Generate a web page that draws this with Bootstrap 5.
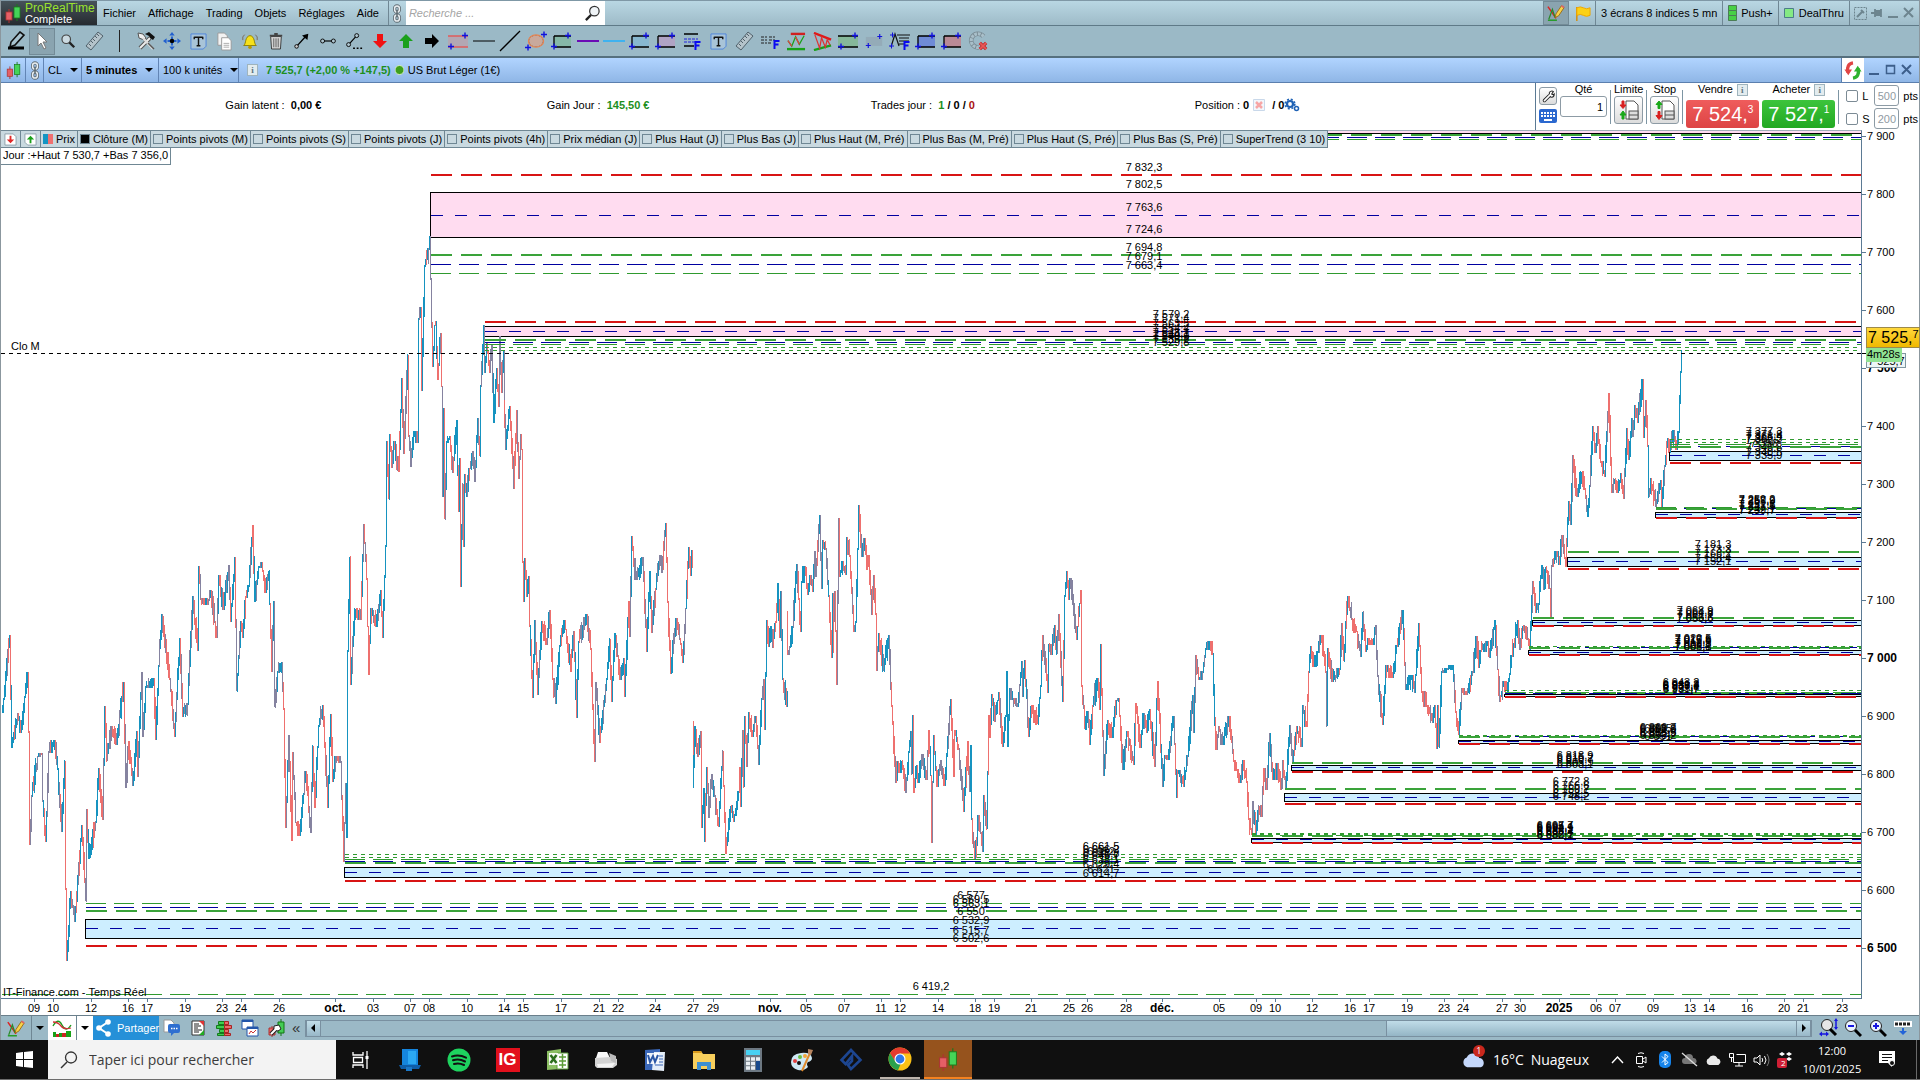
<!DOCTYPE html>
<html lang="fr">
<head>
<meta charset="utf-8">
<meta name="viewport" content="width=device-width, initial-scale=1">
<title>ProRealTime Complete</title>
<link href="https://cdn.jsdelivr.net/npm/bootstrap@5.3.0/dist/css/bootstrap.min.css" rel="stylesheet">
<script src="https://cdn.jsdelivr.net/npm/bootstrap@5.3.0/dist/js/bootstrap.bundle.min.js"></script>
<style>
:root{--steel:#9bb9c6;--edge:#6f8794;--ink:#101010}
body{font-family:"Liberation Sans",Arial,sans-serif;font-size:11px;line-height:14px;color:#000;background:#fff;overflow:hidden}
button,input{font:inherit;color:inherit}
button{border:0;background:none;padding:0}
a{color:inherit;text-decoration:none}
svg{display:block;flex:none}
.terminal{border-left:1px solid #8b979e;border-right:1px solid #8b979e;min-height:0}
.menubar{height:26px;background:linear-gradient(#b9d7e3,#9ebbc8);border-top:1px solid #7f98a6;border-bottom:1px solid #5f7a88}
.brand{width:96px;background:linear-gradient(#46525a,#262b30);line-height:11px;padding-left:4px;gap:4px}
.brand-name{color:#9ae32e;font-size:12px;line-height:12px}
.brand-sub{color:#fff;font-size:11px}
.menus{gap:12px;padding-left:6px;padding-right:9px}
.cell{border-left:1px solid var(--edge);padding:0 5px;white-space:nowrap}
.linker{width:18px}
.winctl{gap:4px;padding:0 4px}
.find{width:199px;background:#fff}
.find input{border:0;outline:0;width:170px;padding:0 3px;font-style:italic;background:none}
.find input::placeholder{color:#a5a5a5;opacity:1}
.pressed{background:#8aa4b0;box-shadow:inset 0 0 0 1px #738b97}
.toolbar{height:32px;background:var(--steel);border-bottom:2px solid #56707e;padding-left:2px}
.tool{width:26px;height:27px;display:flex;align-items:center;justify-content:center}
.titlebar{height:25px;background:linear-gradient(#b1d4ff,#8fb6e6);border-bottom:1px solid #5b7fae}
.titlebar .slot{border-right:1px solid #6285b5;height:100%;display:flex;align-items:center;white-space:nowrap}
.caret{width:0;height:0;border:4px solid transparent;border-top:4px solid #000;border-bottom:0}
.gain{color:#1d8f1d}
.loss{color:#a80f0f}
.sync{width:23px;background:#fff;border-left:1px solid #5b7fae;align-self:stretch;display:flex;align-items:center;justify-content:center}
.account{height:47px}
.figures{padding:0 125px 4px 110px}
.ticket{width:384px;border-left:1px solid #5b7a94;padding-left:3px;gap:3px}
.ticket .head{height:13px;line-height:13px}
.ticket .rule{width:1px;height:34px;background:#7d95a3;margin-top:7px}
.boxbtn{background:linear-gradient(#fff,#dcdcdc);border:1px solid #8d9ba5;border-radius:3px;display:flex;align-items:center;justify-content:center}
.boxbtn.tall{width:29px;height:28px}
.qty{width:47px;height:21px;border:1px solid #8d9ba5;border-radius:3px;text-align:right;padding:0 3px}
.deal{width:73px;height:28px;border-radius:3px;color:#fff;font-size:20px;line-height:26px;text-align:center;white-space:nowrap}
.deal sup{font-size:10px;top:-8px}
.deal-head{margin-bottom:4px}
.guards{gap:2px;padding-top:2px}
.guards label{width:8px}
.sell{background:linear-gradient(#ef5c5c,#dd4444)}
.buy{background:linear-gradient(#3cc43c,#22a822)}
.info{width:11px;height:12px;border:1px solid #9fb4bd;background:#e3ecef;color:#5c747f;font:bold 9px/10px "Liberation Serif",serif;text-align:center}
.tick{appearance:none;width:12px;height:12px;border:1px solid #7c8b95;border-radius:2px;margin:0;background:#fff}
.pts{width:25px;height:21px;border:1px solid #8d9ba5;border-radius:3px;text-align:center;color:#8f9aa2;padding:0}
.sheet{min-height:0}
.plot{border-right:1px solid #5b7a94;border-bottom:1px solid #5b7a94;border-top:1px solid #9fb0b9;position:relative;min-width:0}
.overlays{position:absolute;left:0;top:-1px;z-index:2}
.legend{height:18px;background:#c9d9e0;border:1px solid #6f8794;border-left:0;width:max-content}
.legend label,.legend button{padding:0 2px;height:16px;display:flex;align-items:center;gap:3px;border-right:1px solid #6f8794;white-space:nowrap}
.legend button{padding:0 3px}
.legend .export{color:#e02828}
.legend .import{color:#1aa01a}
.legend .import svg{transform:rotate(180deg)}
.legend label:last-child{border-right:0}
.legend input{appearance:none;width:10px;height:10px;border:1px solid #6f8794;margin:0}
.legend .two{background:linear-gradient(90deg,#1595c3 50%,#f07070 50%);border:0}
.legend .full{background:#000}
.range-note{background:#fff;border:1px solid #6f8794;border-left:0;border-top:0;width:max-content;height:17px;padding:0 2px;line-height:15px}
.price-axis{width:57px;position:relative}
.tag{position:absolute;left:4px;white-space:nowrap}
.tag-last{width:54px;height:21px;background:linear-gradient(#ffd83c,#f0b800);border:1px solid #9d8a4a;font-size:16px;line-height:19px;padding-left:1px}
.tag-last sup{font-size:11px;top:-5px}
.tag-timer{height:14px;width:36px;background:#90e292;font-size:11px;line-height:13px;padding-left:1px}
.tag-close{height:15px;width:40px;background:#edf5f6;border:1px solid #8197a1;line-height:14px;padding-left:1px}
.dates{height:16px}
.bottombar{height:25px;background:var(--steel);border-top:1px solid #6a7f8b}
.share{background:#2590d8;color:#fff;width:66px;gap:6px;padding-left:3px}
.chevrons{font-size:15px;line-height:16px;padding-left:3px;color:#333}
.scrollrail{border:1px solid #7990a0;height:17px;margin:0 7px 0 5px;background:#9bb9c6}
.scrollrail button{width:15px;background:linear-gradient(#c2dde8,#98b8c8);border:1px solid #7990a0;border-width:0 1px;display:flex;align-items:center;justify-content:center}
.thumb{background:linear-gradient(#c0dce8,#94b5c5);width:410px;border-left:1px solid #7990a0}
.zoomer{width:25px}
.taskbar{height:40px;background:var(--ink);color:#fff;font-family:"Open Sans","Noto Sans",sans-serif;border-bottom:1px solid #6d6d6d}
.task{width:49px;display:flex;align-items:center;justify-content:center}
.start{width:48px}
.tasksearch{width:288px;background:#f3f3f3;color:#3b3b3b;padding-left:12px;gap:11px}
.tasksearch input{border:0;outline:0;background:none;font-size:14px;padding:0;width:220px}
.tasksearch input::placeholder{color:#3b3b3b;opacity:1}
.ig{width:24px;height:24px;background:#e2101c;font:bold 17px/24px "Liberation Sans",sans-serif}
.task-open{border-bottom:2px solid #bdb5ad;width:40px;margin:0 4px 0 5px}
.task-live{background:#96531d;border-bottom:2px solid #f5821f;width:48px}
.tray .ti{width:24px;display:flex;justify-content:center}
.weather{font-size:14px;gap:7px;padding-right:16px}
.alert-dot{right:1px;top:-6px;width:12px;height:12px;background:#c9281d;font-size:9px;line-height:12px}
.sync-dot{left:8px;bottom:-1px;font-size:8px;line-height:12px}
.clock{width:70px;font-size:11px;line-height:18px;text-align:center}
.notify{width:49px;padding-left:12px}
.peek{border-left:1px solid #6a6a6a;width:4px}
.face-light{color:#c5d8fb}
.face-white{color:#e9e9e9}
</style>
</head>
<body>
<svg width="0" height="0" class="position-absolute" aria-hidden="true">
<defs>
<symbol id="candles" viewBox="0 0 16 20"><path d="M4 6v14" stroke="#b03030"/><rect x="1" y="9" width="6" height="8" fill="#e55f66" stroke="#a33" stroke-width=".8"/><path d="M12 1v17" stroke="#1c7a1c"/><rect x="9" y="4" width="6" height="11" fill="#45d458" stroke="#1c7a1c" stroke-width=".8"/></symbol>
<symbol id="chain" viewBox="0 0 12 20"><g fill="none" stroke="#5f6b72" stroke-width="3.4"><rect x="3.500" y="2" width="5" height="6.500" rx="2.500"/><rect x="3.500" y="11.500" width="5" height="6.500" rx="2.500"/></g><g fill="none" stroke="#e9eef1" stroke-width="1.600"><rect x="3.500" y="2" width="5" height="6.500" rx="2.500"/><rect x="3.500" y="11.500" width="5" height="6.500" rx="2.500"/><path d="M6 6v8" stroke="#5f6b72"/></g></symbol>
<symbol id="lens" viewBox="0 0 18 18"><circle cx="11" cy="6.500" r="5" fill="#e9f0f3" fill-opacity=".7" stroke="#333" stroke-width="1.300"/><path d="M7.500 10.500L2 16" stroke="#222" stroke-width="2.400"/></symbol>
<symbol id="lens-l" viewBox="0 0 18 18"><circle cx="7" cy="7" r="4.800" fill="#dfe8ec" fill-opacity=".7" stroke="#444" stroke-width="1.300"/><path d="M10.500 10.500L16 16" stroke="#222" stroke-width="2.600"/></symbol>
<symbol id="pen" viewBox="0 0 20 20"><path d="M4 16L5 11 14 1l4 3-9 10z" fill="#a8c3cf" stroke="#111" stroke-width="1.600"/><path d="M2 17h16" stroke="#000" stroke-width="3"/></symbol>
<symbol id="cursor" viewBox="0 0 14 18"><path d="M3 1v13l3-3 3 6 2-1-3-6h4z" fill="#fff" stroke="#777"/></symbol>
<symbol id="ruler" viewBox="0 0 20 20"><path d="M2 15L14 1l5 4L7 19z" fill="#b4c3ca" stroke="#50616b"/><path d="M5 13l2 2M7 10l2 2M9 8l2 2M11 5l2 2M13 3l2 2" stroke="#50616b"/></symbol>
<symbol id="tools" viewBox="0 0 20 20"><path d="M4 17L14 7" stroke="#555" stroke-width="4"/><path d="M4 17L14 7" stroke="#eee" stroke-width="2"/><path d="M2 2l5 1 3 4-2 2-5-2z" fill="#eee" stroke="#555"/><path d="M9 3l4-2 6 5-2 3-3-2-1-2z" fill="#111"/><path d="M7 7l10 11" stroke="#ddd" stroke-width="2.500"/><path d="M12 12l6 6" stroke="#555" stroke-width="1.500"/></symbol>
<symbol id="move" viewBox="0 0 20 20"><path d="M10 0l3 4H7zM10 20l3-4H7zM0 10l4-3v6zM20 10l-4-3v6z" fill="#2260cf"/><path d="M9 5h2v10H9zM5 9h10v2H5z" fill="#2260cf"/><circle cx="10" cy="10" r="2.500" fill="#000"/></symbol>
<symbol id="note" viewBox="0 0 18 18"><path d="M1 1h16v13l-3 3H1z" fill="#a9c4d8" stroke="#4f85dd"/><path d="M4.500 4v2.500M4.500 4.500h9M13.500 4v2.500M9 4.500v9M7 13.500h4" stroke="#111" stroke-width="1.500" fill="none"/></symbol>
<symbol id="copy" viewBox="0 0 18 20"><path d="M2 1h7l3 3v10H2z" fill="#f2f2f2" stroke="#999"/><path d="M6 6h7l3 3v10H6z" fill="#fff" stroke="#999"/><path d="M8 12h6M8 14h6M8 16h6" stroke="#aaa"/></symbol>
<symbol id="bell" viewBox="0 0 20 20"><path d="M3 15c3-2 1-10 7-11 6 1 4 9 7 11z" fill="#f7e11b" stroke="#8a7a00"/><circle cx="10" cy="17" r="2" fill="#b89c00"/><path d="M4 3q-3 2-2 6M16 3q3 2 2 6" stroke="#765" fill="none"/></symbol>
<symbol id="bin" viewBox="0 0 18 20"><path d="M3 5h12l-1 14H4z" fill="#d4d4d4" stroke="#333"/><path d="M2 4h14M7 2h4" stroke="#444" stroke-width="2"/><path d="M6.500 7v10M9 7v10M11.500 7v10" stroke="#555" stroke-width="1"/></symbol>
<symbol id="ray" viewBox="0 0 20 20"><path d="M4 16L14 5" stroke="#000" stroke-width="1.500"/><circle cx="4" cy="16" r="2" fill="#ccc" stroke="#000"/><path d="M17 2l-1 7-6-5z"/></symbol>
<symbol id="seg" viewBox="0 0 20 20"><path d="M4 10h12" stroke="#000" stroke-width="1.300"/><circle cx="4" cy="10" r="2.200" fill="#aec5cf" stroke="#000"/><circle cx="16" cy="10" r="2.200" fill="#aec5cf" stroke="#000"/></symbol>
<symbol id="segd" viewBox="0 0 20 20"><path d="M4 14L13 4" stroke="#000" stroke-width="1.300"/><circle cx="4" cy="14" r="2.200" fill="#aec5cf" stroke="#000"/><circle cx="13" cy="4" r="2.200" fill="#aec5cf" stroke="#000"/><path d="M9 18h2M13 18h2M17 18h2" stroke="#000" stroke-width="1.500"/></symbol>
<symbol id="band" viewBox="0 0 22 18"><rect x="1" y="4" width="20" height="11" fill="var(--f,none)"/><path d="M1 4h20M1 15h20" stroke="var(--l,#000)" stroke-width="1.500"/><path d="M15 3.500h6M18 .500v6M1 14.500h6M4 11.500v6" stroke="#1111dd" stroke-width="1.400"/></symbol>
<symbol id="box" viewBox="0 0 22 18"><rect x="3" y="4" width="17" height="11" fill="var(--f,none)"/><path d="M3 4h17M3 15h17M3 4v11" stroke="#000" stroke-width="1.300"/><path d="M14 3.500h6M17 .500v6M0 14.500h6M3 11.500v6" stroke="#1111dd" stroke-width="1.400"/></symbol>
<symbol id="oval" viewBox="0 0 22 20"><ellipse cx="11" cy="10" rx="7.500" ry="6" fill="#b9ad a8" stroke="#e8834f" stroke-width="1.400"/><ellipse cx="11" cy="10" rx="7" ry="5.500" fill="#c9a99c"/><path d="M16 3.500h6M19 .500v6M0 16.500h6M3 13.500v6" stroke="#1111dd" stroke-width="1.400"/></symbol>
<symbol id="fibo" viewBox="0 0 20 20"><path d="M2 3h14M2 15h10" stroke="#000" stroke-width="1.500"/><path d="M2 8h14M2 11h14" stroke="#22d" stroke-dasharray="3 1"/><path d="M13.500 19v-8h5M13.500 14.500h4" stroke="#0a0af0" stroke-width="2" fill="none"/></symbol>
<symbol id="fibod" viewBox="0 0 20 20"><path d="M1 6h6M9 6h6M1 9h6M9 9h6M1 12h6M8 12h4" stroke="#222" stroke-width="1.200" stroke-dasharray="3 1"/><path d="M14.500 18v-8h5M14.500 13.500h4" stroke="#0a0af0" stroke-width="2" fill="none"/></symbol>
<symbol id="zig" viewBox="0 0 22 20"><path d="M5 2h15" stroke="#d02020" stroke-width="2.500"/><path d="M1 18h19" stroke="#18a018" stroke-width="2.500"/><path d="M2 9l4 6 4-10 4 8 5-9" stroke="#18a018" fill="none" stroke-width="1.300"/><path d="M2 9l4 6M10 5l4 8" stroke="#e04040" stroke-width="1.300"/></symbol>
<symbol id="wedge" viewBox="0 0 22 20"><path d="M2 1l18 7" stroke="#e01818" stroke-width="2.500"/><path d="M2 19l18-5" stroke="#18a018" stroke-width="2.500"/><path d="M3 3l5 14 2-11 4 10 2-8 3 6" stroke="#d33" fill="none" stroke-width="1.300"/></symbol>
<symbol id="flag" viewBox="0 0 18 18"><path d="M3 2v15" stroke="#d98b00" stroke-width="1.500"/><path d="M3 3q4-2 7 0t7 0v8q-4 2-7 0t-7 0z" fill="#fcd116" stroke="#eda600"/></symbol>
<symbol id="draw" viewBox="0 0 22 20"><path d="M2 3l5 7 4 6" stroke="#d22" stroke-width="1.600" fill="none"/><path d="M3 17L7 6l3 9" stroke="#2a8a2a" stroke-width="1.400" fill="none"/><path d="M2 18h10" stroke="#1a9a1a" stroke-width="1.500"/><path d="M10 15l1-4 6-9 3 2-6 9z" fill="#f8d34a" stroke="#9a6a10"/><path d="M17 2l3 2" stroke="#d66" stroke-width="2"/></symbol>
<symbol id="magnet" viewBox="0 0 22 22"><path d="M17 6A7.500 7.500 0 1 0 12 18" stroke="#7a8c95" stroke-width="5" fill="none"/><path d="M17 6A7.500 7.500 0 1 0 12 18" stroke="#a9bfc9" stroke-width="3.400" stroke-dasharray="3 1" fill="none"/><path d="M13 13l7 7M20 13l-7 7" stroke="#c01c1c" stroke-width="3.500"/><path d="M13 13l7 7M20 13l-7 7" stroke="#e75a5a" stroke-width="2"/></symbol>
<symbol id="sync" viewBox="0 0 18 20"><path d="M9 2Q2 3 3.500 12" stroke="#e04545" stroke-width="3.600" fill="none"/><path d="M0 9h8l-4 6z" fill="#e04545"/><path d="M9 18Q16 17 14.500 8" stroke="#2fb32f" stroke-width="3.600" fill="none"/><path d="M10 11h8l-4-6z" fill="#2fb32f"/></symbol>
<symbol id="wrench" viewBox="0 0 16 16"><path d="M3 13l6-6" stroke="#222" stroke-width="4.200" stroke-linecap="round"/><path d="M9 3q3-3 5-1l-2 3 2 1 1-1q0 4-3 4T9 3" fill="#fff" stroke="#222" stroke-width="1.300"/><path d="M3 13l7-7" stroke="#fff" stroke-width="2" stroke-linecap="round"/></symbol>
<symbol id="order" viewBox="0 0 22 22"><path d="M8 2h8l4 4v14H8z" fill="#fff" stroke="#555"/><rect x="11" y="12" width="9" height="8" fill="#ddd" stroke="#555"/><path d="M11 16h9" stroke="#555"/><path d="M4 2h2v4h2L5 9.500 2 6h2z" fill="#d82020" stroke="#d82020"/><path d="M4 20h2v-4h2l-3-4-3 4h2z" fill="#1aa81a" stroke="#1aa81a"/></symbol>
<symbol id="order-s" viewBox="0 0 22 22"><path d="M8 2h8l4 4v14H8z" fill="#fff" stroke="#555"/><rect x="11" y="12" width="9" height="8" fill="#ddd" stroke="#555"/><path d="M11 16h9" stroke="#555"/><path d="M4 9.500h2v-4h2L5 2 2 5.500h2z" fill="#1aa81a" stroke="#1aa81a"/><path d="M4 12.500h2v4h2l-3 4-3-4h2z" fill="#d82020" stroke="#d82020"/></symbol>
<symbol id="gears" viewBox="0 0 16 14"><circle cx="6" cy="6" r="3" fill="none" stroke="#1f62b5" stroke-width="2.200"/><circle cx="6" cy="6" r="4.800" fill="none" stroke="#1f62b5" stroke-width="1.600" stroke-dasharray="2 1.800"/><circle cx="12.500" cy="10.500" r="2" fill="none" stroke="#1f62b5" stroke-width="1.500"/></symbol>
<symbol id="doc" viewBox="0 0 14 14"><path d="M1 1h9l3 3v9H1z" fill="#fff" stroke="#8da0ab"/><path d="M6 3h2v4h3l-4 4-4-4h3z" fill="currentColor"/></symbol>
<symbol id="cloud" viewBox="0 0 24 16"><path d="M6 15a5 5 0 0 1-.500-9.500A6.500 6.500 0 0 1 17.500 6 4.700 4.700 0 0 1 19 15z" fill="currentColor"/></symbol>
</defs>
</svg>

<div class="d-flex flex-column vh-100">
<div class="terminal d-flex flex-column flex-grow-1">

<header class="menubar d-flex align-items-stretch">
  <div class="brand d-flex align-items-center"><svg width="16" height="20"><use href="#candles"/></svg><div><div class="brand-name">ProRealTime</div><div class="brand-sub">Complete</div></div></div>
  <nav class="menus d-flex align-items-center"><a href="#">Fichier</a><a href="#">Affichage</a><a href="#">Trading</a><a href="#">Objets</a><a href="#">Réglages</a><a href="#">Aide</a></nav>
  <button class="linker cell px-0 d-flex align-items-center justify-content-center" aria-label="Lier"><svg width="12" height="19"><use href="#chain"/></svg></button>
  <div class="find d-flex align-items-center"><input type="search" placeholder="Recherche ..." aria-label="Recherche"><svg class="ms-auto me-1" width="17" height="17"><use href="#lens"/></svg></div>
  <div class="ms-auto d-flex align-items-stretch">
    <button class="tool h-100 pressed" aria-label="Dessin"><svg width="20" height="18"><use href="#draw"/></svg></button>
    <button class="tool h-100" aria-label="Drapeau"><svg width="17" height="17"><use href="#flag"/></svg></button>
    <span class="cell d-flex align-items-center">3 écrans 8 indices 5 mn</span>
    <button class="cell d-flex align-items-center gap-1"><svg width="9" height="17"><path d="M.500.500h8v5h-8zM.500 5.500h8v5h-8zM.500 10.500h8v5h-8z" fill="#48d046" stroke="#4b7d55"/></svg>Push+</button>
    <button class="cell d-flex align-items-center gap-1"><svg width="11" height="11"><path d="M.500.500h9v9h-9z" fill="#84ea84" stroke="#4b7d88"/></svg>DealThru</button>
    <div class="cell winctl d-flex align-items-center"><svg width="13" height="13"><path d="M.500.500h12v12H.500z" fill="none" stroke="#6d858f" stroke-dasharray="2 1"/><path d="M3 10l5-5M7 3l3 3" stroke="#6d858f" stroke-width="2"/></svg>
    <svg width="12" height="12"><path d="M0 6h4M4 2v8M4 4h5v4H4M10 2v8" stroke="#6d858f" stroke-width="1.800" fill="#6d858f"/></svg>
    <svg width="12" height="12"><path d="M1 10h10" stroke="#6d858f" stroke-width="2"/></svg>
    <svg width="12" height="12"><path d="M1 1l9 9M10 1l-9 9" stroke="#6d858f" stroke-width="2"/></svg></div>
  </div>
</header>

<div class="toolbar d-flex align-items-center" role="toolbar">
<button class="tool"><svg width="20" height="20"><use href="#pen"/></svg></button>
<button class="tool pressed"><svg width="14" height="18"><use href="#cursor"/></svg></button>
<button class="tool"><svg width="16" height="16"><use href="#lens-l"/></svg></button>
<button class="tool"><svg width="20" height="20"><use href="#ruler"/></svg></button>
<span class="tool"><svg width="2" height="22"><path d="M.500 0v22" stroke="#222"/></svg></span>
<button class="tool"><svg width="20" height="20"><use href="#tools"/></svg></button>
<button class="tool"><svg width="18" height="18"><use href="#move"/></svg></button>
<button class="tool"><svg width="17" height="17"><use href="#note"/></svg></button>
<button class="tool"><svg width="17" height="19"><use href="#copy"/></svg></button>
<button class="tool"><svg width="20" height="18"><use href="#bell"/></svg></button>
<button class="tool"><svg width="16" height="18"><use href="#bin"/></svg></button>
<button class="tool"><svg width="18" height="18"><use href="#ray"/></svg></button>
<button class="tool"><svg width="18" height="18"><use href="#seg"/></svg></button>
<button class="tool"><svg width="18" height="20"><use href="#segd"/></svg></button>
<button class="tool"><svg width="14" height="16"><path d="M4 1h6v7h4l-7 7-7-7h4z" fill="#f01010"/></svg></button>
<button class="tool"><svg width="14" height="16"><path d="M4 15h6V8h4L7 1 0 8h4z" fill="#1ba01b"/></svg></button>
<button class="tool"><svg width="16" height="14"><path d="M1 4h7V0l7 7-7 7v-4H1z"/></svg></button>
<button class="tool" style="--f:#b3a7b3;--l:#e05c5c"><svg width="22" height="18"><use href="#band"/></svg></button>
<button class="tool"><svg width="22" height="2"><path d="M0 1h22" stroke="#000"/></svg></button>
<button class="tool"><svg width="22" height="22"><path d="M1 21L21 1" stroke="#000" stroke-width="1.300"/></svg></button>
<button class="tool"><svg width="22" height="20"><use href="#oval"/></svg></button>
<button class="tool" style="--f:#86b8a8"><svg width="22" height="18"><use href="#box"/></svg></button>
<button class="tool"><svg width="22" height="2"><path d="M0 1h22" stroke="#6a0bb5" stroke-width="2"/></svg></button>
<button class="tool"><svg width="22" height="2"><path d="M0 1h22" stroke="#3fb2ef" stroke-width="2"/></svg></button>
<button class="tool" style="--f:#88b8d0"><svg width="22" height="18"><use href="#box"/></svg></button>
<button class="tool" style="--f:#b0a4c4"><svg width="22" height="18"><use href="#box"/></svg></button>
<button class="tool"><svg width="20" height="20"><use href="#fibo"/></svg></button>
<button class="tool"><svg width="17" height="17"><use href="#note"/></svg></button>
<button class="tool"><svg width="20" height="20"><use href="#ruler"/></svg></button>
<button class="tool"><svg width="20" height="20"><use href="#fibod"/></svg></button>
<button class="tool"><svg width="21" height="19"><use href="#zig"/></svg></button>
<button class="tool"><svg width="21" height="19"><use href="#wedge"/></svg></button>
<button class="tool" style="--f:#86b89a"><svg width="22" height="18"><use href="#band"/></svg></button>
<button class="tool" style="--f:#94abb8;--l:none"><svg width="18" height="16"><use href="#band"/></svg></button>
<button class="tool"><svg width="22" height="20" viewBox="0 0 22 20"><path d="M2 16L6 3l4 12M8 4h13M10 7h10M10 10h10M10 13h6" stroke="#111" stroke-width="1.200" fill="none"/><path d="M1 4h5M3.500 1.500v5M0 15h5M2.500 12.500v5" stroke="#11d"/><path d="M15.500 19v-8h5M15.500 14.500h4" stroke="#0a0af0" stroke-width="2" fill="none"/></svg></button>
<button class="tool" style="--f:#6f8bd6"><svg width="22" height="18"><use href="#box"/></svg></button>
<button class="tool" style="--f:#b98a96"><svg width="22" height="18"><use href="#box"/></svg></button>
<button class="tool"><svg width="20" height="22"><use href="#magnet"/></svg></button>
</div>

<div class="titlebar d-flex align-items-center">
  <span class="slot justify-content-center" style="width:25px"><svg width="15" height="18"><use href="#candles"/></svg></span>
  <span class="slot justify-content-center" style="width:18px"><svg width="12" height="19"><use href="#chain"/></svg></span>
  <button class="slot gap-2 ps-1" style="width:38px">CL<span class="caret"></span></button>
  <button class="slot gap-2 fw-bold ps-1" style="width:77px">5 minutes<span class="caret"></span></button>
  <button class="slot gap-2 ps-1" style="width:80px">100 k unités<span class="caret"></span></button>
  <span class="info ms-2">i</span>
  <span class="gain fw-bold ms-2">7 525,7 (+2,00 % +147,5)</span>
  <svg class="mx-1" width="9" height="10"><circle cx="4.500" cy="5" r="4.500" fill="#3f9f1c" stroke="#d8efc8"/></svg>
  <span>US Brut Léger (1€)</span>
  <div class="ms-auto d-flex align-items-center align-self-stretch">
    <button class="sync" aria-label="Actualiser"><svg width="18" height="19"><use href="#sync"/></svg></button>
    <svg width="55" height="14"><path d="M5 11h10" stroke="#3d5f8c" stroke-width="2"/><path d="M22.500 2.500h8v8h-8zM22 3h9" fill="none" stroke="#3d5f8c" stroke-width="1.500"/><path d="M38 2l9 9M47 2l-9 9" stroke="#3d5f8c" stroke-width="2"/></svg>
  </div>
</div>

<section class="account d-flex">
  <div class="figures d-flex flex-grow-1 align-items-center text-center">
    <div class="col-3">Gain latent :&nbsp; <b>0,00 €</b></div>
    <div class="col-3">Gain Jour :&nbsp; <b class="gain">145,50 €</b></div>
    <div class="col-3">Trades jour :&nbsp; <b><span class="gain">1</span> / 0 / <span class="loss">0</span></b></div>
    <div class="col-3 d-flex align-items-center justify-content-center">Position :&nbsp; <b>0</b><svg class="mx-1" width="12" height="12"><path d="M.500.500h11v11H.500z" fill="#f3f6fb" stroke="#c9d8ea"/><path d="M3 3l6 6M9 3l-6 6" stroke="#f7a5a5" stroke-width="2.500"/></svg>&nbsp;<b>/ 0</b><svg width="16" height="14"><use href="#gears"/></svg></div>
  </div>
  <form class="ticket d-flex">
    <div class="d-flex flex-column gap-1 pt-1"><button type="button" class="boxbtn" style="width:18px;height:18px" aria-label="Options"><svg width="13" height="13"><use href="#wrench"/></svg></button>
      <button type="button" aria-label="Clavier"><svg width="18" height="14"><rect width="18" height="14" rx="2" fill="#2b68cf"/><path d="M2 4h14M2 7h14" stroke="#fff" stroke-width="2" stroke-dasharray="2 1"/><path d="M5 11h8" stroke="#fff" stroke-width="2"/></svg></button></div>
    <div class="d-flex flex-column align-items-center"><label class="head" for="qty">Qté</label><input id="qty" class="qty" value="1"></div>
    <span class="rule"></span>
    <div class="d-flex flex-column align-items-center"><span class="head">Limite</span><button type="button" class="boxbtn tall" aria-label="Limite"><svg width="22" height="22"><use href="#order"/></svg></button></div>
    <span class="rule"></span>
    <div class="d-flex flex-column align-items-center"><span class="head">Stop</span><button type="button" class="boxbtn tall" aria-label="Stop"><svg width="22" height="22"><use href="#order-s"/></svg></button></div>
    <span class="rule"></span>
    <div class="d-flex flex-column align-items-center"><span class="head deal-head d-flex align-items-center gap-1">Vendre<span class="info">i</span></span><button type="button" class="deal sell">7 524,<sup>3</sup></button></div>
    <div class="d-flex flex-column align-items-center"><span class="head deal-head d-flex align-items-center gap-1">Acheter<span class="info">i</span></span><button type="button" class="deal buy">7 527,<sup>1</sup></button></div>
    <span class="rule"></span>
    <div class="guards d-flex flex-column ps-1">
      <div class="d-flex align-items-center gap-1"><input type="checkbox" class="tick" id="ckL"><label for="ckL">L</label><input class="pts" value="500" aria-label="Limite pts"><span>pts</span></div>
      <div class="d-flex align-items-center gap-1"><input type="checkbox" class="tick" id="ckS"><label for="ckS">S</label><input class="pts" value="200" aria-label="Stop pts"><span>pts</span></div>
    </div>
  </form>
</section>

<main class="sheet d-flex flex-grow-1">
  <div class="plot flex-grow-1" id="plot">
    <div class="overlays">
      <div class="legend d-flex">
        <button class="export" aria-label="Réduire"><svg width="13" height="13"><use href="#doc"/></svg></button>
        <button class="import" aria-label="Agrandir"><svg width="13" height="13"><use href="#doc"/></svg></button>
        <label><input type="checkbox" class="two" checked>Prix</label>
        <label><input type="checkbox" class="full" checked>Clôture (M)</label>
        <label><input type="checkbox">Points pivots (M)</label>
        <label><input type="checkbox">Points pivots (S)</label>
        <label><input type="checkbox">Points pivots (J)</label>
        <label><input type="checkbox">Points pivots (4h)</label>
        <label><input type="checkbox">Prix médian (J)</label>
        <label><input type="checkbox">Plus Haut (J)</label>
        <label><input type="checkbox">Plus Bas (J)</label>
        <label><input type="checkbox">Plus Haut (M, Pré)</label>
        <label><input type="checkbox">Plus Bas (M, Pré)</label>
        <label><input type="checkbox">Plus Haut (S, Pré)</label>
        <label><input type="checkbox">Plus Bas (S, Pré)</label>
        <label><input type="checkbox">SuperTrend (3 10)</label>
      </div>
      <div class="range-note">Jour :+Haut 7 530,7 +Bas 7 356,0</div>
    </div>
    <svg id="chart" class="position-absolute top-0 start-0 w-100 h-100"></svg>
  </div>
  <div class="price-axis" id="axis">
    <svg id="scale" class="position-absolute top-0 start-0 w-100 h-100"></svg>
    <div class="tag tag-close" data-y="353">7 525,7</div>
    <div class="tag tag-timer" data-y="348">4m28s</div>
    <div class="tag tag-last" data-y="327">7 525,<sup>7</sup></div>
  </div>
</main>
<div class="dates"><svg id="dates" class="w-100" height="16"></svg></div>

<div class="bottombar d-flex align-items-center">
  <button style="width:30px" class="d-flex justify-content-center"><svg width="20" height="19"><use href="#draw"/></svg></button>
  <button class="cell h-100 px-1"><span class="caret d-block"></span></button>
  <div class="bg-white h-100 d-flex align-items-center"><button class="px-1"><svg width="20" height="19" viewBox="0 0 20 19"><path d="M1 7q5-9 9-1t9 0" stroke="#1a9a1a" fill="none" stroke-width="1.300"/><path d="M1 3q5 0 8 4t10 2" stroke="#c33" fill="none" stroke-width="1.300"/><path d="M1 13h3v5H1zM7 14h3v4H7zM14 12h5v6h-5z" fill="#18a018"/><path d="M4 15h3v3H4zM10 14h4v4h-4z" fill="#c22"/></svg></button><button class="cell h-100 px-1"><span class="caret d-block"></span></button></div>
  <button class="share h-100 d-flex align-items-center"><svg width="15" height="18" viewBox="0 0 15 18"><path d="M12 3L3 9l9 6" stroke="#fff" stroke-width="2" fill="none"/><circle cx="12" cy="3" r="2.800" fill="#fff"/><circle cx="3" cy="9" r="2.800" fill="#fff"/><circle cx="12" cy="15" r="2.800" fill="#fff"/></svg>Partager</button>
  <button class="tool"><svg width="18" height="18" viewBox="0 0 18 18"><path d="M1 1h7l3 3v9H1z" fill="#fff" stroke="#999"/><rect x="5" y="5" width="12" height="9" rx="2" fill="#2f6fd0"/><path d="M8 13v4l4-4z" fill="#2f6fd0"/><path d="M8 9.500h7" stroke="#fff" stroke-width="1.500" stroke-dasharray="1.500 1"/></svg></button>
  <button class="tool"><svg width="14" height="16"><path d="M1 1h12v14H1z" fill="#fff" stroke="#333"/><path d="M3 4h5M3 6h7M3 8h4M3 10h8M3 12h5" stroke="#222"/><path d="M8 1h5v5z" fill="#d33"/><path d="M8 15h5v-5z" fill="#2a2"/></svg></button>
  <button class="tool"><svg width="17" height="17"><path d="M2.500 1.500h6v3h-6zM.500 5.500h8v3h-8zM3.500 9.500h5v3h-5zM1.500 13.500h7v2h-7z" fill="#3fce4f" stroke="#157a1d"/><path d="M8.500 1.500h4v3h-4zM8.500 5.500h7v3h-7zM8.500 9.500h4v3h-4zM8.500 13.500h6v2h-6z" fill="#ea6a6a" stroke="#a22"/></svg></button>
  <button class="tool"><svg width="18" height="18"><path d="M1 1h11v9H1z" fill="#fff" stroke="#2255aa"/><path d="M1 2h11" stroke="#2255aa" stroke-width="2"/><path d="M6 8h11v9H6z" fill="#fff" stroke="#2255aa"/><path d="M6 9h11" stroke="#2255aa" stroke-width="2"/><path d="M8 15l2-3 2 2 3-3" stroke="#c33" fill="none"/></svg></button>
  <button class="tool"><svg width="17" height="19"><path d="M4 7v11" stroke="#a33"/><path d="M1 9h6v7H1z" fill="#e66" stroke="#a33"/><path d="M13 0v17" stroke="#171"/><path d="M10 3h6v11h-6z" fill="#4c5" stroke="#171"/><path d="M3 15l6-6" stroke="#222" stroke-width="4"/><path d="M6 7l5-1 2 4-3 2-4-1z" fill="#fff" stroke="#222"/><path d="M3 15l6-6" stroke="#fff" stroke-width="2"/></svg></button>
  <span class="chevrons">«</span>
  <div class="scrollrail d-flex flex-grow-1"><button aria-label="Gauche"><svg width="5" height="8"><path d="M4 0v8L0 4z"/></svg></button><div class="thumb ms-auto"></div><button aria-label="Droite"><svg width="5" height="8"><path d="M1 0v8l4-4z"/></svg></button></div>
  <button class="zoomer"><svg width="20" height="20"><circle cx="8" cy="7" r="5.500" fill="#e6e6e6" stroke="#222"/><path d="M11 11l6 6" stroke="#000" stroke-width="3"/><path d="M1 16h8M17 2v9" stroke="#1616e0" stroke-width="1.500"/><path d="M0 16l3-2.500v5zM10 16l-3-2.500v5zM17 0l2 3h-4zM17 12l2-3h-4z" fill="#1616e0"/></svg></button>
  <button class="zoomer"><svg width="18" height="19"><circle cx="7" cy="7" r="5.500" fill="#eaf4ff" stroke="#222"/><path d="M11 11l6 6" stroke="#000" stroke-width="3"/><path d="M4 7h6" stroke="#1616e0" stroke-width="2"/></svg></button>
  <button class="zoomer"><svg width="18" height="19"><circle cx="7" cy="7" r="5.500" fill="#eaf4ff" stroke="#222"/><path d="M11 11l6 6" stroke="#000" stroke-width="3"/><path d="M4 7h6M7 4v6" stroke="#1616e0" stroke-width="2"/></svg></button>
  <button class="zoomer"><svg width="18" height="16"><path d="M0 1h18v6H0z" fill="#fff"/><path d="M1 4h16" stroke="#222" stroke-width="3" stroke-dasharray="3 1"/><path d="M8 8h2v3h3l-4 4-4-4h3z" fill="#2264d8"/></svg></button>
</div>
</div>

<footer class="taskbar d-flex align-items-stretch">
  <button class="task start" aria-label="Démarrer"><svg width="17" height="17"><path d="M0 2l7-1v7H0zM8 1l9-1v8H8zM0 9h7v7l-7-1zM8 9h9v8l-9-1z" fill="#fff"/></svg></button>
  <div class="tasksearch d-flex align-items-center"><svg width="18" height="18"><circle cx="11" cy="6.500" r="5.500" fill="none" stroke="#333" stroke-width="1.300"/><path d="M7 11l-6 6" stroke="#333" stroke-width="1.500"/></svg><input type="search" placeholder="Taper ici pour rechercher" aria-label="Rechercher"></div>
  <button class="task"><svg width="18" height="18"><path d="M1 1v3h10V1M1 17v-3h10v3M1.500 6.500h9v5h-9zM15 0v18" stroke="#fff" fill="none" stroke-width="1.300"/><path d="M13.500 5h3v3h-3z" fill="#fff"/></svg></button>
  <button class="task"><svg width="24" height="24"><path d="M4 1h16v17H4z" fill="#1585dd"/><path d="M10 3h8v13h-8z" fill="#2ba8f2"/><path d="M1 17h22l-2 4H3z" fill="#0e5da8"/><path d="M8 19h6v4H8z" fill="#1a78c8"/></svg></button>
  <button class="task"><svg width="24" height="24"><circle cx="12" cy="12" r="11.500" fill="#1ed35f"/><path d="M5 8.500q7-2.500 14 1.200M6 12.300q6-2 12 1.200M7 16q5-1.600 10 1" stroke="#111" stroke-width="2" fill="none" stroke-linecap="round"/></svg></button>
  <button class="task"><span class="ig">IG</span></button>
  <button class="task"><svg width="24" height="24"><path d="M2 3l14-2v20L2 22z" fill="#8cbf64"/><path d="M12 5h11v16H12z" fill="#fff" stroke="#5b9c36"/><path d="M14 9h7M14 13h7M14 17h7M17.500 6v14" stroke="#5b9c36" stroke-width="1.500"/><path d="M4 5h9v12H4z" fill="#fff" opacity=".9"/><path d="M5.500 7l6 8M11.500 7l-6 8" stroke="#2c6e1c" stroke-width="2.500"/></svg></button>
  <button class="task"><svg width="24" height="20"><path d="M4 2h9l3 6H2z" fill="#fafafa"/><path d="M1 8l15-1 7 2v6l-4 3H3l-2-2z" fill="#d4d4d4"/><path d="M3 14l18-1-3 4H4z" fill="#f5f5f5"/><path d="M15 3l7 3v7l-5-2z" fill="#bbb"/></svg></button>
  <button class="task"><svg width="24" height="24"><path d="M2 2l15-1v21L2 22z" fill="#3a67b8"/><path d="M11 4h11l-1 19-12-1z" fill="#e4edf8"/><path d="M13 8h7M13 11h7M13 14h7M12 17h8" stroke="#3a67b8"/><path d="M4 5h12v11H4z" fill="#fff" opacity=".9"/><path d="M5 7l2 7 3-6 2 6 3-7" stroke="#2a56a5" stroke-width="2" fill="none"/></svg></button>
  <button class="task"><svg width="24" height="22"><path d="M1 2h8l2 3h12v15H1z" fill="#f8cf5c"/><path d="M1 2h8l1 2H1z" fill="#d99a1c"/><path d="M5 21v-8h14v8h-4v-4H9v4z" fill="#3d8fd1"/></svg></button>
  <button class="task"><svg width="20" height="24"><path d="M1 0h18v24H1z" fill="#6d7882"/><path d="M3 2h14v5H3z" fill="#48d1f2"/><path d="M3 11h14M3 15.500h10M3 20h10" stroke="#e9eef2" stroke-width="3.500" stroke-dasharray="4 1"/><path d="M13 13h4v9h-4z" fill="#184a8c"/></svg></button>
  <button class="task"><svg width="24" height="24"><path d="M1 14q0-8 10-9t11 5q0 3-4 4-2 2 0 5-4 4-10 3-7-2-7-8z" fill="#cfe9f5"/><circle cx="5" cy="13" r="2" fill="#e24040"/><circle cx="10" cy="9" r="2" fill="#6abf40"/><circle cx="15" cy="8" r="2" fill="#f2a53a"/><circle cx="9" cy="15" r="2" fill="#111"/><path d="M12 23l8-18" stroke="#e08b2e" stroke-width="2"/><path d="M18 1l5 1-2 5-3-1z" fill="#b88560"/></svg></button>
  <button class="task"><svg width="24" height="24"><path d="M12 2L2.500 12l4 4L13 8v5l-4 4 3 4 9.500-9z" fill="none" stroke="#1d4691" stroke-width="2.600"/></svg></button>
  <button class="task task-open"><svg width="24" height="24" viewBox="0 0 24 24"><circle cx="12" cy="12" r="11.500" fill="#fbc116"/><path d="M12 .500A11.500 11.500 0 0 1 22 6.500H12l-5 8L2 6.300A11.500 11.500 0 0 1 12 .500z" fill="#e33b2e"/><path d="M2 6.300l5.500 8.500 5 2.500-2.500 6A11.500 11.500 0 0 1 2 6.300z" fill="#2aa14b"/><circle cx="12" cy="12" r="5.500" fill="#fff"/><circle cx="12" cy="12" r="4.400" fill="#2f78e8"/></svg></button>
  <button class="task task-live"><svg width="20" height="24"><use href="#candles"/></svg></button>

  <div class="tray ms-auto d-flex align-items-center">
    <button class="weather d-flex align-items-center"><span class="position-relative"><svg class="face-light" width="25" height="18"><use href="#cloud"/></svg><span class="alert-dot position-absolute rounded-circle text-center">1</span></span><span>16°C</span><span>Nuageux</span></button>
    <span class="ti"><svg width="13" height="8"><path d="M1 7l5.500-6L12 7" stroke="#fff" stroke-width="1.400" fill="none"/></svg></span>
    <span class="ti"><svg width="12" height="16"><path d="M3 1.500q3-1.500 6 0M3 14.500q3 1.500 6 0M1.500 4.500h6v7h-6zM8 7l3-2v6L8 9" stroke="#fff" fill="none"/></svg></span>
    <span class="ti"><svg width="12" height="17"><rect width="12" height="17" rx="5" fill="#1583ea"/><path d="M3 5.500l6 6-3 2.500V3l3 2.500-6 6" stroke="#fff" fill="none"/></svg></span>
    <span class="ti"><svg width="17" height="15"><path d="M4 12a3 3 0 0 1 0-6 4 4 0 0 1 8 0 3 3 0 0 1 1 6z" fill="#777"/><path d="M1 1l15 13" stroke="#ddd" stroke-width="1.300"/></svg></span>
    <span class="ti"><svg class="face-white" width="17" height="12"><use href="#cloud"/></svg></span>
    <span class="ti"><svg width="17" height="15"><path d="M4.500 4.500v6h12v-8h-9M10 11v3M6 14h8M.500 1.500h4v4h-4zM2.500 5v5" stroke="#fff" fill="none"/></svg></span>
    <span class="ti"><svg width="17" height="14"><path d="M1 5h3l3-3v10L4 9H1z" stroke="#fff" fill="none"/><path d="M9 5q1.500 2 0 4M11.500 3q3 4 0 8" stroke="#fff" fill="none"/><path d="M14 1q4 6 0 12" stroke="#777" fill="none"/></svg></span>
    <span class="ti position-relative"><svg width="17" height="17"><path d="M5 1l3 2-3 2-3-2zM12 1l3 2-3 2-3-2zM12 6l3 2-3 2-3-2z" fill="#fff"/><rect x="0" y="7" width="10" height="10" rx="2" fill="#cf1f35"/></svg><span class="sync-dot position-absolute">2</span></span>
    <div class="clock"><div>12:00</div><div>10/01/2025</div></div>
    <span class="notify"><svg width="17" height="17"><path d="M0 0h16v12h-3v4l-4-4H0z" fill="#fff"/><path d="M3 3.500h10M3 6.500h10M3 9.500h6" stroke="#111"/><circle cx="13" cy="12" r="2.500" fill="#111" stroke="#fff"/></svg></span>
    <span class="peek align-self-stretch"></span>
  </div>
</footer>
</div>

<script>
// Swing points of the 5 minute series: x, y pairs on a 1861 x 868 sheet whose top is 130; each array is one run between session gaps.
const swings=[
[2,713,4,700,10,637,12,748,18,715,21,733,25,698,28,674,29,733,30,845,32,797,38,757,42,755,43,802,46,842,49,753,55,742,58,770,62,832,65,762,66,890,67,961,71,893,75,922,82,827,86,902,87,811,89,859,96,823,99,770,103,820,105,708,107,762,112,728,117,745,124,684,126,788,129,743,133,786,137,733,138,777,142,674,143,737,146,688,154,680,156,740,159,667,162,616,170,680,175,737,180,640,183,717,188,705,193,598,198,651,199,568,201,600,208,605,211,592,217,638,219,577,224,610,229,567,231,622,235,559,237,692,241,623,243,638,246,598,249,587,253,526,255,602,259,568,262,564,266,593,269,572,272,672,274,603,275,708,278,673,282,664,284,710,286,828,289,737,292,841,293,754,296,823,300,836,306,773,311,833,313,747,315,808,319,727,323,707,328,808,331,716,333,782,336,758,341,763,344,862,346,785,347,838,348,652,350,558,351,685,355,610,361,620,364,526,367,580,369,675,371,610,377,627,381,592,383,638,386,547,387,443,389,500,390,436,392,468,394,443,399,472,402,380,404,454,408,356,409,437,411,467,414,433,418,443,419,320,421,309,422,391,425,267,429,250,430,238,431,280,433,367,435,327,436,323,438,380,441,335,442,387,443,497,444,410,445,520,447,443,450,438,453,473,457,422,459,512,460,460,461,587,463,485,464,547,465,476,467,497,470,470,473,453,475,482,478,420,480,457,481,387,484,327,485,373,487,345,490,373,492,347,494,423,497,370,499,407,500,338,502,393,504,352,504,400,506,450,510,408,514,489,517,412,519,479,521,436,522,450,523,563,524,602,525,560,527,597,529,578,530,627,533,698,535,622,538,695,542,623,547,645,550,612,553,680,556,704,560,647,565,622,571,672,574,633,577,718,579,643,587,616,591,650,595,762,596,684,600,743,607,680,610,640,612,702,615,635,618,657,620,680,624,660,625,697,629,603,630,637,632,538,636,580,643,559,647,652,650,573,652,633,656,590,660,557,662,573,666,525,668,603,671,674,676,620,681,645,683,663,686,610,689,549,691,576,692,552,693,568],
[693,723,693,788,695,728,698,757,701,733,702,828,704,790,705,842,707,769,709,818,712,776,715,797,719,827,723,752,724,787,726,854,731,807,734,822,739,793,740,769,741,807,743,732,744,788,745,718,747,767,749,714,753,737,756,718,759,765,762,700,764,681,765,730,767,622,769,647,771,628,773,648,776,623,778,585,780,638,781,593,783,680,788,707],
[787,613,788,655,790,648,793,628,797,566,799,600,801,632,802,583,805,568,808,595,810,577,813,592,815,553,816,577,820,517,822,589,823,542,826,550,829,597,832,658,833,595,833,653,835,593,836,632,837,685,839,520,840,577,843,563,846,575,847,539,850,557,854,632,856,623,858,550,859,507,862,557,865,540,867,570,869,557,872,615,874,577,876,615,877,671,879,635,884,672,889,637,892,707,896,783,898,763,899,773,902,762,906,793,909,753,911,733,912,775,913,717,914,793,917,767,918,783,923,756,927,780,929,732,931,777,932,843,933,783,934,737,937,787,941,762,945,786,951,701,954,777,955,732,959,750,964,812,968,743,970,792,971,747,972,820,975,859,979,817,983,852,984,797,987,830,989,717,990,738,992,696,995,722,999,694,1003,747,1006,717,1007,673,1008,747,1010,690,1013,700,1018,707,1022,663,1023,697,1025,662,1029,737,1032,707,1038,725,1041,687,1043,637,1048,693,1049,645,1052,655,1055,627,1057,655,1059,616,1063,702,1065,597,1067,573,1069,600,1071,580,1077,640,1081,592,1082,687,1086,730,1088,713,1090,745,1093,707,1098,680,1100,710,1101,646,1104,776,1108,722,1112,738,1117,702,1119,700,1123,770,1127,733,1134,765,1136,705,1141,748,1143,715,1147,733,1150,711,1155,767,1158,683,1163,787,1165,757,1168,760,1174,718,1177,798,1178,772,1184,787,1188,757,1193,697,1194,733,1196,657,1199,680,1203,673,1206,650,1209,643,1213,655,1216,750,1219,728,1223,745,1229,718,1234,762,1237,771,1240,783,1243,762,1247,783,1249,820,1252,835,1253,803,1256,835,1259,807,1262,817,1264,770,1267,790,1270,735,1273,780,1277,765,1282,790,1283,762,1286,790,1290,727,1293,763,1297,728,1302,747,1303,707,1307,727,1309,673,1311,648,1314,667,1318,653,1322,637,1326,673,1327,727,1328,650,1333,682,1340,670,1342,625,1344,662,1348,598,1352,620,1357,633,1361,657,1363,613,1366,652,1368,640,1374,645,1376,627,1378,677,1383,726,1386,667,1393,678,1397,647,1403,612,1406,690,1412,677,1415,693,1419,625,1422,693,1427,707,1433,723,1435,707,1437,749,1438,707,1439,748,1442,673,1447,670,1453,667,1456,713,1459,735,1462,690,1467,695,1473,673,1477,638,1479,668,1481,652,1488,643,1490,658,1495,622,1500,702,1504,683,1508,692,1512,657,1518,622,1520,650,1523,627,1528,640,1530,650,1533,583,1536,613,1539,605,1542,567,1544,590,1546,568,1550,590,1551,617,1552,567,1557,553,1560,565,1562,537,1566,567,1569,503,1571,525,1573,457,1577,497,1582,473,1585,490,1588,517,1590,487,1593,428,1596,453,1598,428,1601,463,1605,477,1609,395,1612,493,1615,480,1618,493,1621,475,1624,499,1627,430,1629,460,1632,420,1633,437,1635,407,1638,423,1643,381,1644,438,1646,402,1648,447,1649,498,1651,480,1656,507,1661,482,1662,508,1665,467,1668,440,1670,453,1674,432,1676,450,1679,433,1681,373,1682,352]];
// kind: R red, G thick green, B blue, g thin green, d dotted green, T/F band edges, M band middle
const zones=[
{x:1290,cx:0,pink:1,l:[['T',7910],['F',7905],['G',7901.5],['B',7897.5],['g',7894]]},
{x:430,cx:1144,pink:1,l:[['R',7832.3],['T',7802.5],['M',7763.6],['F',7724.6],['G',7694.8],['B',7679.1],['g',7663.4]]},
{x:484,cx:1171,pink:1,l:[['R',7579.2],['T',7571.4],['M',7563.5],['F',7554.4],['G',7548.1],['B',7544.3],['g',7540.6],['d',7535.2],['d',7529.8]]},
{x:1669,cx:1764,l:[['d',7377.3],['d',7371.8],['g',7368.4],['B',7365.3],['G',7362.2],['T',7356],['M',7348.8],['F',7340.5],['R',7335.9]]},
{x:1655,cx:1757,l:[['g',7259.2],['B',7257.9],['G',7255.9],['T',7251.3],['M',7247.5],['F',7242.1],['R',7239.7]]},
{x:1567,cx:1713,l:[['G',7181.3],['T',7173.3],['M',7166.2],['F',7158.4],['R',7152.1]]},
{x:1532,cx:1695,l:[['G',7068.9],['T',7064.8],['M',7061.2],['F',7056.3],['R',7053.6]]},
{x:1528,cx:1693,l:[['d',7020.5],['B',7017.6],['G',7015.8],['T',7012.5],['M',7009.3],['F',7006.1],['R',7003.8]]},
{x:1504,cx:1681,l:[['d',6943.2],['d',6941.2],['G',6939.4],['B',6938.2],['T',6937.1],['F',6933.7],['R',6931.7]]},
{x:1458,cx:1658,l:[['d',6866.7],['d',6865],['B',6863.8],['G',6862.9],['T',6858.3],['M',6855.9],['F',6853.2],['R',6851]]},
{x:1291,cx:1575,l:[['G',6818.9],['T',6815.2],['M',6810.7],['F',6805.9],['R',6803.1]]},
{x:1284,cx:1571,l:[['G',6772.8],['T',6766.6],['M',6759.7],['F',6752.5],['R',6748.2]]},
{x:1251,cx:1555,l:[['d',6697.7],['d',6695.4],['g',6694.1],['G',6692.9],['T',6689.2],['M',6686.4],['F',6682.1],['R',6680.2]]},
{x:344,cx:1101,l:[['d',6661.5],['d',6656.2],['g',6652],['B',6648.8],['G',6645.7],['T',6638.1],['M',6629.4],['F',6621],['R',6614.7]]},
{x:85,cx:971,l:[['g',6577],['B',6569.5],['G',6563.1],['T',6550],['M',6532.9],['F',6515.7],['R',6502.6]]},
{x:1,cx:931,l:[['g',6419.2]]}];
const days=[[34,'09'],[53,'10'],[91,'12'],[128,'16'],[147,'17'],[185,'19'],[222,'23'],[241,'24'],[279,'26'],[335,'oct.'],[373,'03'],[410,'07'],[429,'08'],[467,'10'],[504,'14'],[523,'15'],[561,'17'],[599,'21'],[618,'22'],[655,'24'],[693,'27'],[713,'29'],[770,'nov.'],[806,'05'],[844,'07'],[881,'11'],[900,'12'],[938,'14'],[975,'18'],[994,'19'],[1031,'21'],[1069,'25'],[1087,'26'],[1126,'28'],[1162,'déc.'],[1219,'05'],[1256,'09'],[1275,'10'],[1312,'12'],[1350,'16'],[1369,'17'],[1407,'19'],[1444,'23'],[1463,'24'],[1502,'27'],[1520,'30'],[1559,'2025'],[1596,'06'],[1615,'07'],[1653,'09'],[1690,'13'],[1709,'14'],[1747,'16'],[1784,'20'],[1803,'21'],[1842,'23']];
const pen={R:['#d81414',2,'21 9'],G:['#3aa33a',2,'21 9'],B:['#0000a0',1,'20 8'],g:['#2f9a2f',1,'20 8'],d:['#2f9a2f',1,'4 4'],M:['#0000a0',1,'12 12']};
const fmt=p=>{const s=String(p).replace('.',',');return s[0]+' '+s.slice(1)};
function draw(){
  const el=document.getElementById('chart'),W=el.clientWidth,H=el.clientHeight;
  const X=x=>(x-1)*W/1860,Y=y=>(y-131)*H/867,P=p=>Y(309.5+(7600-p)*.58);
  let seed=7;const rnd=()=>(seed=(seed*16807)%2147483647)/2147483647;
  let up='',dn='',mx='';
  for(const run of swings)for(let i=0;i+3<run.length;i+=2){
    const[x0,y0,x1,y1]=run.slice(i,i+4),n=Math.max(1,x1-x0),lo=Math.min(y0,y1),hi=Math.max(y0,y1);
    for(let k=0;k<n;k++){
      const a=y0+(y1-y0)*k/n,b=y0+(y1-y0)*(k+1)/n;
      const t=Math.max(lo-1,Math.min(a,b)-rnd()*12),d=Math.min(hi+1,Math.max(a,b)+rnd()*12);
      const r=`M${Math.round(X(x0+k))+.5} ${Math.round(Y(t-1))}V${Math.round(Y(d-1))}`;
      const q=rnd();if(q<.25)mx+=r;else if((y1<y0)===(q<.9))up+=r;else dn+=r;
    }}
  let bands='',lines='',text='';
  for(const z of zones){
    const x=Math.round(X(z.x))+.5,at=k=>Math.round(P(z.l.find(v=>v[0]===k)[1]))+.5;
    if(z.l.some(v=>v[0]==='T')){const t=at('T'),f=at('F');bands+=`<rect x="${x}" y="${t}" width="${W-x+5}" height="${f-t}" fill="${z.pink?'#ffdcf0':'#cdeeff'}" stroke="#000"/>`}
    for(const[k,p]of z.l){
      if(pen[k]){const[c,w,s]=pen[k],y=Math.round(P(p))+(w===1?.5:0);lines+=`<path d="M${x} ${y}H${W}" stroke="${c}" stroke-width="${w}" stroke-dasharray="${s}"/>`}
      if(z.cx)text+=`<text x="${Math.round(X(z.cx))}" y="${Math.round(P(p))-4}" text-anchor="middle">${fmt(p)}</text>`;
    }}
  const close=Math.round(Y(353))+.5;
  el.innerHTML=`<g shape-rendering="crispEdges" fill="none">${bands}<path d="${dn}" stroke="#ee706e"/><path d="${up}" stroke="#1693c0"/><path d="${mx}" stroke="#8583a0"/>${lines}<path d="M0 ${close}H${W}" stroke="#000" stroke-dasharray="4 4"/></g><g font-size="11">${text}<text x="10" y="${close-4}">Clo M</text><text x="2" y="${H-2}">IT-Finance.com - Temps Réel</text></g>`;
  let ax='';
  for(let p=7900;p>=6500;p-=100){const y=Math.round(P(p)),b=p%500===0;ax+=`<path d="M0 ${y+1.5}h4" stroke="#5b7a94"/><text x="5" y="${y+5}" ${b?'font-weight="bold" font-size="12"':''}>${fmt(p)}</text>`}
  ax+=`<path d="M0 ${close+1}h4" stroke="#000"/>`;
  document.getElementById('scale').innerHTML=`<g font-size="11">${ax}</g>`;
  document.querySelectorAll('.tag').forEach(t=>t.style.top=Math.round(Y(+t.dataset.y)+1)+'px');
  document.getElementById('dates').innerHTML='<g font-size="11" text-anchor="middle">'+days.map(([x,s])=>`<path d="M${Math.round(X(x))+.5} 0v3" stroke="#5b7a94"/><text x="${Math.round(X(x))}" y="13" ${s.length>2?'font-weight="bold" font-size="12"':''}>${s}</text>`).join('')+'</g>';
}
draw();addEventListener('resize',draw);
</script>
</body>
</html>
